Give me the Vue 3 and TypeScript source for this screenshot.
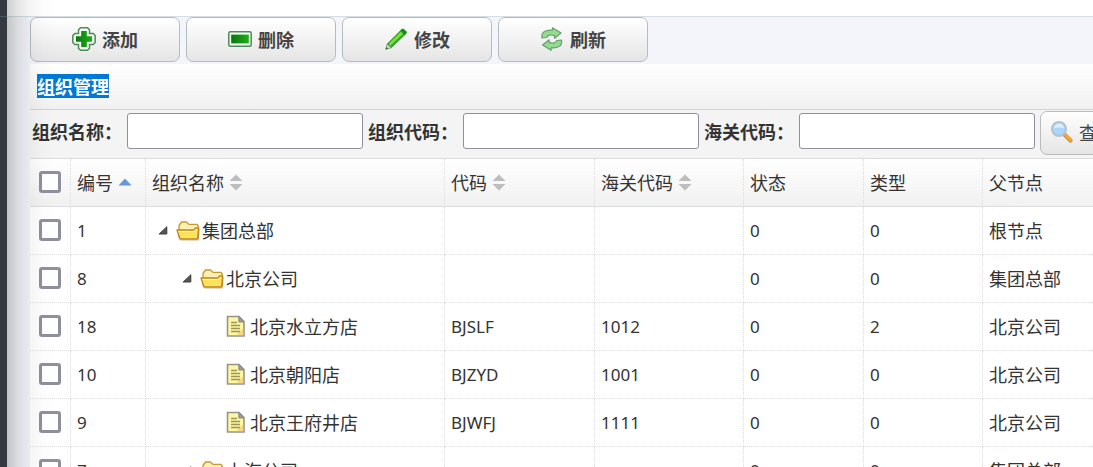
<script setup lang="ts">
import { ref } from 'vue'

interface OrgRow {
  id: number
  name: string
  level: number
  kind: 'folder' | 'leaf'
  code: string
  customs: string
  status: number
  type: number
  parent: string
}

interface Column {
  key: string
  label: string
  sort: 'none' | 'both' | 'asc'
}

const actions = [
  { key: 'add', label: '添加' },
  { key: 'remove', label: '删除' },
  { key: 'edit', label: '修改' },
  { key: 'refresh', label: '刷新' },
]

const filters = ref([
  { key: 'name', label: '组织名称：', value: '' },
  { key: 'code', label: '组织代码：', value: '' },
  { key: 'customs', label: '海关代码：', value: '' },
])

const columns: Column[] = [
  { key: 'id', label: '编号', sort: 'asc' },
  { key: 'name', label: '组织名称', sort: 'both' },
  { key: 'code', label: '代码', sort: 'both' },
  { key: 'customs', label: '海关代码', sort: 'both' },
  { key: 'status', label: '状态', sort: 'none' },
  { key: 'type', label: '类型', sort: 'none' },
  { key: 'parent', label: '父节点', sort: 'none' },
]

const rows: OrgRow[] = [
  { id: 1, name: '集团总部', level: 0, kind: 'folder', code: '', customs: '', status: 0, type: 0, parent: '根节点' },
  { id: 8, name: '北京公司', level: 1, kind: 'folder', code: '', customs: '', status: 0, type: 0, parent: '集团总部' },
  { id: 18, name: '北京水立方店', level: 2, kind: 'leaf', code: 'BJSLF', customs: '1012', status: 0, type: 2, parent: '北京公司' },
  { id: 10, name: '北京朝阳店', level: 2, kind: 'leaf', code: 'BJZYD', customs: '1001', status: 0, type: 0, parent: '北京公司' },
  { id: 9, name: '北京王府井店', level: 2, kind: 'leaf', code: 'BJWFJ', customs: '1111', status: 0, type: 0, parent: '北京公司' },
  { id: 7, name: '上海公司', level: 1, kind: 'folder', code: '', customs: '', status: 0, type: 0, parent: '集团总部' },
]

const selected = ref<number[]>([])

function toggleAll(event: Event) {
  selected.value = (event.target as HTMLInputElement).checked ? rows.map((row) => row.id) : []
}
</script>

<template>
  <div class="shell">
    <aside class="sidebar"></aside>
    <main class="main">
      <header class="topbar"></header>
      <div class="content">
        <div class="actions">
          <button v-for="action in actions" :key="action.key" type="button" class="btn action">
            <svg v-if="action.key === 'add'" class="icon" viewBox="0 0 24 24" aria-hidden="true">
              <defs>
                <linearGradient id="green-add" x1="0" x2="1">
                  <stop offset="0" stop-color="#08780a" />
                  <stop offset="1" stop-color="#1fae1a" />
                </linearGradient>
              </defs>
              <path d="M8.500.8h7l2 2v3.700h3.700l2 2v7l-2 2h-3.700v3.700l-2 2h-7l-2-2v-3.700H2.800l-2-2v-7l2-2h3.700V2.800z" fill="#f4fbf4" stroke="#4d8b57" stroke-width="1.500" />
              <path d="M9.200 4h5.600v5.200H20v5.600h-5.200V20H9.200v-5.200H4V9.200h5.200z" fill="url(#green-add)" />
            </svg>
            <svg v-else-if="action.key === 'remove'" class="icon" viewBox="0 0 24 24" aria-hidden="true">
              <defs>
                <linearGradient id="green-remove" x1="0" x2="1">
                  <stop offset="0" stop-color="#08780a" />
                  <stop offset="1" stop-color="#1fae1a" />
                </linearGradient>
              </defs>
              <rect x=".8" y="4.800" width="22.400" height="14.400" rx="1.500" fill="#f4fbf4" stroke="#4d8b57" stroke-width="1.500" />
              <rect x="3.200" y="7.600" width="17.600" height="8.800" fill="url(#green-remove)" />
            </svg>
            <svg v-else-if="action.key === 'edit'" class="icon" viewBox="0 0 24 24" aria-hidden="true">
              <path d="M3.200 17 17.800 2.400q1-.8 2 0l2.200 2.200q.8 1 0 2L7.400 20.600z" fill="#32a51f" stroke="#2c8f30" stroke-width=".8" />
              <path d="M4.600 16.800 17 4.600l2.200 2.200L6.400 18.800z" fill="#79df3c" />
              <path d="M17.800 2.400q1-.8 2 0l2.200 2.200q.8 1 0 2l-1.400 1.400-4.200-4.200z" fill="#168f18" />
              <path d="M3.200 17 7.400 20.600 2 22.200z" fill="#cfe0c2" stroke="#5d8b60" stroke-width=".8" />
              <path d="m1.400 22.600.8-2.600 1.800 1.800z" fill="#2c6732" />
            </svg>
            <svg v-else class="icon" viewBox="0 0 24 24" aria-hidden="true">
              <path d="M2 11C1 5 5.500 2.600 12.500 3.200V.8L21 6l-6.500 5.200V8.600C10 7.400 7.500 8 7 10.500z" fill="#95da90" stroke="#64a06a" stroke-width="1.200" stroke-linejoin="round" />
              <path d="M21.600 13c1 6-3.500 8.400-10.500 7.800v2.400L2.600 18l6.500-5.200v2.600c4.500 1.200 7 .6 7.500-1.900z" fill="#95da90" stroke="#64a06a" stroke-width="1.200" stroke-linejoin="round" />
            </svg>
            <span>{{ action.label }}</span>
          </button>
        </div>

        <section class="panel">
          <h1 class="panel-head"><span class="panel-title">组织管理</span></h1>
          <form class="filters" @submit.prevent>
            <template v-for="field in filters" :key="field.key">
              <label class="filter-label" :for="field.key">{{ field.label }}</label>
              <input :id="field.key" v-model="field.value" class="filter-input" type="text" />
            </template>
            <button type="submit" class="btn query">
              <svg class="icon" viewBox="0 0 24 24" aria-hidden="true">
                <path d="m14.500 14.500 6 6" stroke="#c98a45" stroke-width="4.200" stroke-linecap="round" />
                <path d="m15.500 15 5 5" stroke="#f8a737" stroke-width="2.600" stroke-linecap="round" />
                <circle cx="9" cy="9" r="7" fill="#a9d6fa" stroke="#b9c0cc" stroke-width="2" />
                <path d="M4 8.500a5 5 0 0 1 10 0q-5-2-10 0z" fill="#d8efff" />
              </svg>
              <span>查询</span>
            </button>
          </form>

          <table class="grid">
            <colgroup>
              <col class="w-check" />
              <col class="w-id" />
              <col class="w-name" />
              <col class="w-code" />
              <col class="w-customs" />
              <col class="w-status" />
              <col class="w-type" />
              <col />
            </colgroup>
            <thead>
              <tr>
                <th class="check-cell">
                  <input type="checkbox" class="check" aria-label="全选" :checked="selected.length === rows.length" @change="toggleAll" />
                </th>
                <th v-for="column in columns" :key="column.key" scope="col">
                  <span class="head-cell">
                    {{ column.label }}
                    <svg v-if="column.sort === 'asc'" class="sort" viewBox="0 0 14 18" aria-hidden="true">
                      <path d="M.5 12.500 7 5.500l6.500 7z" fill="#6796d8" />
                    </svg>
                    <svg v-else-if="column.sort === 'both'" class="sort" viewBox="0 0 14 18" aria-hidden="true">
                      <path d="M.5 8 7 1.500 13.500 8zM.5 11 7 17.500l6.500-6.500z" fill="#bdbdbd" />
                    </svg>
                  </span>
                </th>
              </tr>
            </thead>
            <tbody>
              <tr v-for="row in rows" :key="row.id">
                <td class="check-cell">
                  <input v-model="selected" type="checkbox" class="check" :value="row.id" :aria-label="row.name" />
                </td>
                <td class="latin">{{ row.id }}</td>
                <td>
                  <div class="tree" :class="'level-' + row.level">
                    <svg v-if="row.kind === 'folder'" class="twisty" viewBox="0 0 24 24" aria-hidden="true">
                      <path d="M14.800 8.800v7.200H7.200z" fill="#555" stroke="#3c3c3c" stroke-linejoin="round" />
                    </svg>
                    <svg v-if="row.kind === 'folder'" class="node" viewBox="0 0 24 24" aria-hidden="true">
                      <path d="M3 19V7.500L5.500 4h5l2.500 2.400h8l1.200 1.600V20z" fill="#fdf0b0" stroke="#c8982c" stroke-width="1.300" stroke-linejoin="round" />
                      <path d="M1 12h16.500l2-2h3.200L21.500 21H4z" fill="#fbe35c" stroke="#bd8623" stroke-width="1.300" stroke-linejoin="round" />
                      <path d="M2.500 13.500h15.500l2-2" fill="none" stroke="#fffbd0" />
                      <path d="M4.500 22.200H22.500l1-11" fill="none" stroke="#9c7a37" stroke-opacity=".4" />
                    </svg>
                    <svg v-else class="node" viewBox="0 0 24 24" aria-hidden="true">
                      <path d="M3.500 2.500h11.500l5 5v14.500H3.500z" fill="#fdf8a0" stroke="#99958c" stroke-width="1.600" />
                      <path d="M14.800 2.500V8H20z" fill="#a29c86" stroke="#8d8a84" />
                      <path d="M19.300 14v7.200h-7z" fill="#f5c96f" opacity=".7" />
                      <path d="M7 8.500h6M7 11.500h9M7 14.500h9M7 17.500h9" stroke="#9a9460" stroke-width="1.400" />
                    </svg>
                    <span>{{ row.name }}</span>
                  </div>
                </td>
                <td class="latin">{{ row.code }}</td>
                <td class="latin">{{ row.customs }}</td>
                <td class="latin">{{ row.status }}</td>
                <td class="latin">{{ row.type }}</td>
                <td>{{ row.parent }}</td>
              </tr>
            </tbody>
          </table>
        </section>
      </div>
    </main>
  </div>
</template>

<style>
body {
  margin: 0;
}
</style>

<style scoped>
.shell {
  display: flex;
  height: 100vh;
  overflow: hidden;
  font: 18px/24px "Noto Sans CJK SC", sans-serif;
  color: #333;
}

.sidebar {
  position: relative;
  flex: 0 0 7px;
  background: linear-gradient(#4a545f, #4a545f) 0 16px / 100% 1px no-repeat #343941;
}

/* Soft shadow cast by the sidebar over the content */
.sidebar::after {
  content: "";
  position: absolute;
  z-index: 1;
  top: 0;
  bottom: 0;
  left: 100%;
  width: 48px;
  pointer-events: none;
  background: linear-gradient(to right, rgba(0, 0, 0, 0.2), rgba(0, 0, 0, 0.1) 22%, rgba(0, 0, 0, 0.04) 48%, rgba(0, 0, 0, 0.01) 75%, transparent);
}

.main {
  flex: 1;
  min-width: 0;
  background: #f3f5fa;
}

.topbar {
  height: 16px;
  background: #fff;
  border-bottom: 1px solid #d5dde5;
}

.content {
  padding-left: 23px;
}

.actions {
  display: flex;
  gap: 6px;
  padding-bottom: 2px;
}

.btn {
  display: flex;
  align-items: center;
  box-sizing: border-box;
  height: 45px;
  border: 1px solid #b3bcc3;
  border-radius: 7px;
  background: linear-gradient(#fff, #e5e5e5);
  color: #444;
  font: inherit;
}

.action {
  justify-content: center;
  gap: 6px;
  width: 150px;
  padding: 0 0 2px;
  font-weight: 700;
}

.icon {
  flex: none;
  width: 24px;
  height: 24px;
}

.panel {
  overflow: hidden;
  background: #fff;
}

.panel-head {
  margin: 0;
  padding: 10px 7px 11px;
  border-bottom: 1px solid #d3d3d3;
  background: linear-gradient(#fff, #f1f1f1);
  font-size: 18px;
  line-height: 24px;
}

.panel-title {
  display: block;
  width: max-content;
  background: #0078d7;
  color: #fff;
}

.filters {
  display: flex;
  align-items: center;
  gap: 5px;
  height: 48px;
  padding-left: 2px;
  border-bottom: 1px solid #ddd;
  background: #f4f4f4;
  white-space: nowrap;
}

.filter-label {
  flex: none;
  padding-bottom: 6px;
  font-weight: 700;
}

.filter-input {
  flex: none;
  box-sizing: border-box;
  width: 236px;
  height: 36px;
  margin-bottom: 6px;
  padding: 0 6px;
  border: 1px solid #8f8f9d;
  border-radius: 3px;
  background: #fff;
  font: inherit;
}

.query {
  flex: none;
  gap: 5px;
  height: 44px;
  margin-bottom: 2px;
  padding: 0 9px 2px;
  border-color: #bbb;
}

.grid {
  width: 100%;
  table-layout: fixed;
  border-collapse: separate;
  border-spacing: 0;
}

.w-check { width: 41px; }
.w-id { width: 75px; }
.w-name { width: 299px; }
.w-code { width: 150px; }
.w-customs { width: 149px; }
.w-status { width: 120px; }
.w-type { width: 119px; }

.grid th,
.grid td {
  box-sizing: border-box;
  height: 48px;
  padding: 0 6px 2px;
  border-right: 1px dotted #ddd;
  border-bottom: 1px dotted #ddd;
  overflow: hidden;
  font-weight: 400;
  text-align: left;
  white-space: nowrap;
}

.grid th {
  border-bottom: 1px solid #ddd;
  background: linear-gradient(#fff, #f1f1f1);
}

.grid th:last-child,
.grid td:last-child {
  border-right: 0;
}

.grid .check-cell {
  padding: 0 9px 2px;
}

.grid .latin {
  font-family: "Noto Sans", sans-serif;
  font-size: 17px;
  padding-bottom: 0;
}

.head-cell {
  display: flex;
  align-items: center;
  gap: 5px;
}

.sort {
  width: 14px;
  height: 18px;
}

.check {
  display: block;
  box-sizing: border-box;
  width: 22px;
  height: 22px;
  margin: 0;
  border: 3px solid #8f8f9d;
  border-radius: 3px;
  background: #fff;
  appearance: none;
}

.check:checked {
  background: #0078d7;
}

.tree {
  display: flex;
  align-items: center;
}

.level-1 { padding-left: 24px; }
.level-2 { padding-left: 72px; }

.twisty,
.node {
  flex: none;
  width: 24px;
  height: 24px;
}

.node {
  margin-right: 2px;
}
</style>
